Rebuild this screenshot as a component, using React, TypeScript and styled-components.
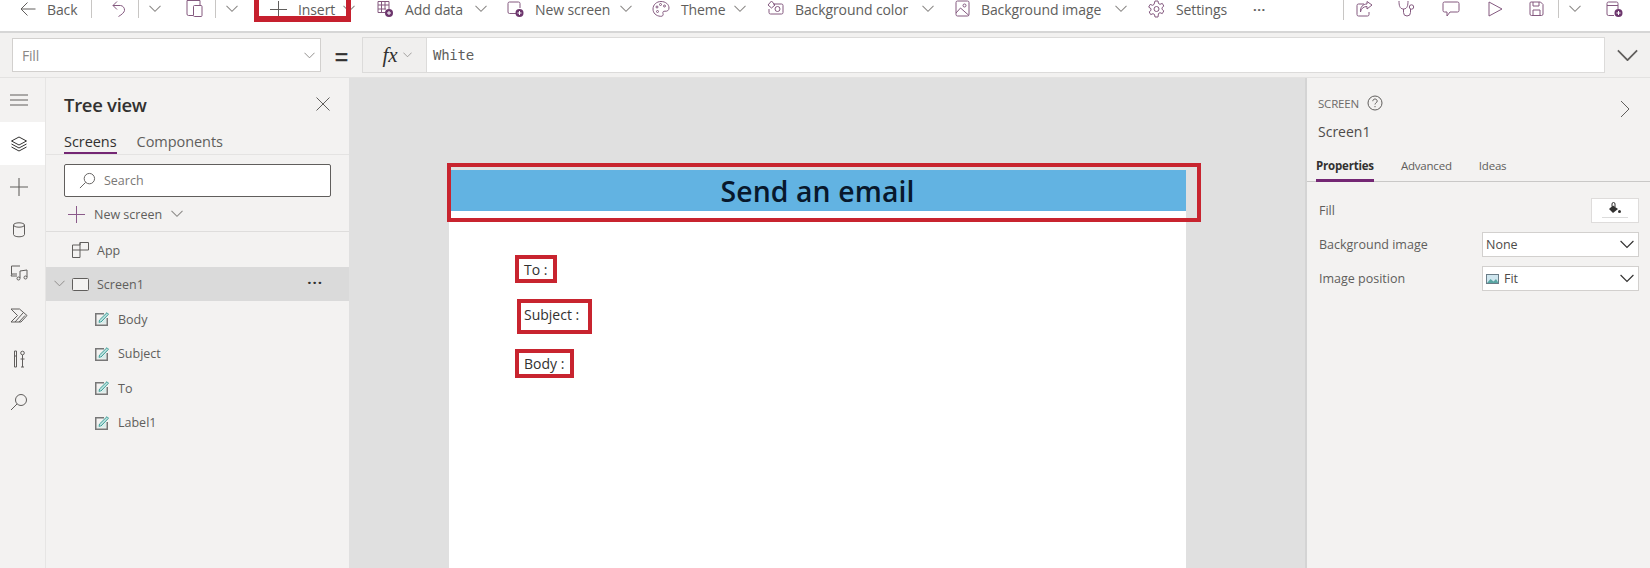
import React from "react";
import styled, { createGlobalStyle } from "styled-components";

const GlobalStyle = createGlobalStyle`
  html, body { margin: 0; padding: 0; height: 100%; background: #fff; overflow: hidden; }
  body { font-family: "Open Sans", "Noto Sans", "Liberation Sans", sans-serif; color: #605e5c; }
  * { box-sizing: border-box; }
`;

const Page = styled.div`
  width: 1650px;
  height: 568px;
  display: flex;
  flex-direction: column;
  overflow: hidden;
`;

/* ---------- top command bar ---------- */
const CommandBar = styled.div`
  position: relative;
  flex: none;
  height: 31px;
  padding-left: 20px;
  display: flex;
  align-items: flex-start;
  background: #fff;
  overflow: hidden;
`;
const Slot = styled.div<{ $w: number }>`
  flex: none;
  width: ${(p) => p.$w}px;
  height: 18px;
  display: flex;
  align-items: center;
  gap: 11px;
  font-size: 14px;
  letter-spacing: -0.1px;
  color: #605e5c;
  white-space: nowrap;
`;
const Separator = styled.span<{ $h?: number }>`
  display: block;
  width: 1px;
  height: ${(p) => p.$h ?? 18}px;
  background: #c8c6c4;
`;
const Dots = styled.span`
  font-size: 13px;
  font-weight: 700;
  letter-spacing: 0.5px;
  line-height: 14px;
  color: #605e5c;
`;
const InsertMark = styled.div`
  position: absolute;
  left: 254px;
  top: -8px;
  width: 97px;
  height: 30px;
  border: solid #c6202e;
  border-width: 5px 5px 6px 5px;
  pointer-events: none;
`;

/* ---------- formula bar ---------- */
const FormulaBar = styled.div`
  flex: none;
  height: 47px;
  display: flex;
  align-items: flex-start;
  padding: 4px 0 0 12px;
  background: #f2f1f0;
  border-top: 2px solid #d6d6d6;
  border-bottom: 1px solid #e3e2e1;
`;
const PropertySelect = styled.div`
  width: 309px;
  height: 34px;
  margin-top: 1px;
  padding: 0 5px 0 9px;
  display: flex;
  align-items: center;
  justify-content: space-between;
  background: #fff;
  border: 1px solid #d2d0ce;
  font-size: 14px;
  letter-spacing: -0.2px;
  color: #8a8886;
`;
const EqualSign = styled.div`
  width: 41px;
  height: 36px;
  display: flex;
  align-items: center;
  justify-content: center;
  font: 400 23px "Liberation Sans", sans-serif;
  -webkit-text-stroke: 0.4px #323130;
  color: #323130;
  padding-top: 4px;
`;
const FxButton = styled.div`
  width: 64px;
  height: 36px;
  display: flex;
  align-items: center;
  justify-content: center;
  gap: 5px;
  padding-left: 5px;
  background: #f0efee;
  border: 1px solid #dcdbda;
  border-right: none;
  font: italic 400 21px "Liberation Serif", serif;
  color: #323130;
`;
const FormulaInput = styled.div`
  width: 1179px;
  height: 36px;
  padding: 0 6px;
  display: flex;
  align-items: center;
  background: #fff;
  border: 1px solid #dcdbda;
  font: 14px "DejaVu Sans Mono", "Liberation Mono", monospace;
  letter-spacing: -0.25px;
  color: #605e5c;
`;
const FormulaExpand = styled.div`
  width: 45px;
  height: 36px;
  display: flex;
  align-items: center;
  justify-content: center;
`;

/* ---------- body ---------- */
const Workspace = styled.div`
  flex: 1;
  min-height: 0;
  display: flex;
`;
const Rail = styled.nav`
  flex: none;
  width: 46px;
  background: #f3f2f1;
  border-right: 1px solid #e6e5e4;
`;
const RailSlot = styled.div<{ $active?: boolean; $h?: number }>`
  width: 45px;
  height: ${(p) => p.$h ?? 43}px;
  padding-left: 10px;
  display: flex;
  align-items: center;
  background: ${(p) => (p.$active ? "#fff" : "transparent")};
`;

const TreePanel = styled.aside`
  flex: none;
  width: 303px;
  background: #f3f2f1;
`;
const PanelTitleRow = styled.div`
  height: 54px;
  padding: 0 19px 2px 18px;
  display: flex;
  align-items: center;
  justify-content: space-between;
`;
const PanelTitle = styled.h2`
  margin: 0;
  font-size: 18.5px;
  font-weight: 600;
  letter-spacing: -0.3px;
  color: #323130;
`;
const TreeTabs = styled.div`
  height: 23px;
  padding-left: 18px;
  display: flex;
  gap: 20px;
  border-bottom: 1px solid #e4e3e2;
`;
const TreeTab = styled.div<{ $active?: boolean }>`
  height: 22px;
  line-height: 20px;
  font-size: 14.5px;
  letter-spacing: -0.05px;
  color: ${(p) => (p.$active ? "#323130" : "#605e5c")};
  border-bottom: 2px solid ${(p) => (p.$active ? "#742774" : "transparent")};
`;
const SearchBox = styled.div`
  height: 33px;
  margin: 9px 18px 0;
  padding-left: 14px;
  display: flex;
  align-items: center;
  gap: 8px;
  background: #fff;
  border: 1px solid #605e5c;
  border-radius: 2px;
  font-size: 12.5px;
  color: #7a7876;
`;
const NewScreenRow = styled.div`
  height: 35px;
  padding-left: 22px;
  display: flex;
  align-items: center;
  gap: 9px;
  font-size: 12.5px;
  color: #605e5c;
  border-bottom: 1px solid #dedddc;
`;
const TreeRow = styled.div<{ $depth?: number; $selected?: boolean }>`
  height: 34.5px;
  position: relative;
  padding-left: ${(p) => (p.$depth === 1 ? 49 : 26)}px;
  padding-top: 2px;
  display: flex;
  align-items: center;
  gap: ${(p) => (p.$depth === 1 ? 9 : 8)}px;
  font-size: 12.5px;
  color: #605e5c;
  background: ${(p) => (p.$selected ? "#dadada" : "transparent")};
`;
const RowCaret = styled.span`
  position: absolute;
  left: 8px;
  top: 13px;
  display: flex;
`;
const RowMenu = styled.span`
  position: absolute;
  right: 26px;
  top: 8px;
  font-size: 15px;
  font-weight: 700;
  line-height: 14px;
  letter-spacing: 1px;
  color: #323130;
`;

const Canvas = styled.main`
  flex: 1;
  min-width: 0;
  padding: 92px 119px 0 100px;
  background: #e0e0e0;
`;
const AppScreen = styled.div`
  position: relative;
  width: 737px;
  height: 400px;
  background: #fff;
`;
const HeaderLabel = styled.div`
  height: 41px;
  display: flex;
  align-items: center;
  justify-content: center;
  background: #62b3e2;
  font-size: 28.4px;
  font-weight: 600;
  letter-spacing: 0.1px;
  color: #08182c;
`;
const HeaderMark = styled.div`
  position: absolute;
  left: -2px;
  top: -7px;
  width: 754px;
  height: 59px;
  border: 4px solid #c8242f;
`;
const FieldLabel = styled.div<{ $x: number; $y: number; $w: number; $h: number; $lift?: number }>`
  position: absolute;
  left: ${(p) => p.$x}px;
  top: ${(p) => p.$y}px;
  width: ${(p) => p.$w}px;
  height: ${(p) => p.$h}px;
  padding-left: ${(p) => (p.$x === 68 ? 3 : 5)}px;
  padding-bottom: ${(p) => p.$lift ?? 0}px;
  display: flex;
  align-items: center;
  border: 4px solid #c8242f;
  font-size: 14px;
  color: #323130;
  white-space: nowrap;
`;

const PropsPanel = styled.aside`
  flex: none;
  width: 345px;
  background: #f3f2f1;
  border-left: 2px solid #d4d4d4;
`;
const PropsHead = styled.div`
  position: relative;
  height: 76px;
  padding: 15px 0 0 11px;
`;
const ScreenKind = styled.div`
  display: flex;
  align-items: center;
  gap: 8px;
  height: 20px;
  font-size: 11.5px;
  letter-spacing: -0.2px;
  color: #6d6b69;
`;
const ScreenName = styled.div`
  margin-top: 9px;
  font-size: 14px;
  color: #4d4b49;
`;
const Collapse = styled.span`
  position: absolute;
  right: 20px;
  top: 22px;
  display: flex;
`;
const PropsTabs = styled.div`
  height: 28px;
  padding-left: 9px;
  display: flex;
  gap: 27px;
  border-bottom: 1px solid #c9c8c7;
`;
const PropsTab = styled.div<{ $active?: boolean }>`
  height: 28px;
  line-height: 24px;
  font-size: 11.5px;
  letter-spacing: -0.2px;
  font-weight: ${(p) => (p.$active ? 700 : 400)};
  color: ${(p) => (p.$active ? "#323130" : "#605e5c")};
  border-bottom: ${(p) => (p.$active ? "3px solid #742774" : "none")};
`;
const PropsForm = styled.div`
  padding: 15px 11px 0 12px;
  display: flex;
  flex-direction: column;
  gap: 9px;
`;
const PropRow = styled.div<{ $h?: number }>`
  height: ${(p) => p.$h ?? 25}px;
  display: flex;
  align-items: center;
  justify-content: space-between;
  font-size: 12.5px;
  color: #605e5c;
`;
const Swatch = styled.div`
  width: 48px;
  height: 25px;
  display: flex;
  flex-direction: column;
  align-items: center;
  padding-top: 3px;
  gap: 3px;
  background: #fff;
  border: 1px solid #dedcdb;
`;
const SwatchLine = styled.span`
  width: 26px;
  height: 1px;
  background: #dcdcdc;
`;
const PropSelect = styled.div`
  width: 157px;
  height: 25px;
  padding: 0 4px 0 3px;
  display: flex;
  align-items: center;
  gap: 5px;
  background: #fff;
  border: 1px solid #d2d0ce;
  font-size: 12.5px;
  color: #4d4b49;
`;
const SelectValue = styled.span`
  flex: 1;
`;

/* ---------- drawings ---------- */
const P = "#84597f";
const B = "#6d366d";
const G = "#605e5c";

const Glyph = styled.svg`
  flex: none;
  display: block;
  fill: none;
  stroke-width: 1;
`;

const Chevron = ({ size = 12, color = "#8a8886" }: { size?: number; color?: string }) => (
  <Glyph width={size} height={size * 0.6} viewBox="0 0 12 7" stroke={color} preserveAspectRatio="none">
    <path d="M.5.8 6 6.2 11.5.8" />
  </Glyph>
);
const Arrow = () => (
  <Glyph width="16" height="16" viewBox="0 0 16 16" stroke={G}>
    <path d="M15.5 8H1M7.5 1.5 1 8l6.5 6.5" />
  </Glyph>
);
const Undo = () => (
  <Glyph width="14" height="16" viewBox="0 0 14 16" stroke={P}>
    <path d="M5 .5 1 4.500 5 8.500M1 4.500h7.500a4.500 4.500 0 0 1 4 5c-.3 1.800-2.500 4-6 6" />
  </Glyph>
);
const Paste = () => (
  <Glyph width="17" height="17" viewBox="0 0 17 17" stroke={P} style={{ marginTop: -2 }}>
    <path d="M7 15.500H2.500A1.500 1.500 0 0 1 1 14V.5h13V5" />
    <rect x="7.500" y="5.500" width="8.500" height="11" rx="1" />
  </Glyph>
);
const Plus = ({ size = 17, color = G }: { size?: number; color?: string }) => (
  <Glyph width={size} height={size} viewBox="0 0 17 17" stroke={color}>
    <path d="M8.500 0v17M0 8.500h17" />
  </Glyph>
);
const Badge = ({ cx, cy }: { cx: number; cy: number }) => (
  <>
    <circle cx={cx} cy={cy} r="4" fill={B} stroke="none" />
    <path d={`M${cx - 2} ${cy}h4M${cx} ${cy - 2}v4`} stroke="#fff" />
  </>
);
const AddData = () => (
  <Glyph width="17" height="18" viewBox="0 0 17 18" stroke={P}>
    <path d="M1 1.500h11v8M1 1.500v11h7M1 5h11M1 9h8M4.500 1.500v11M8 1.500v8" />
    <Badge cx={12} cy={13} />
  </Glyph>
);
const NewScreen = () => (
  <Glyph width="17" height="18" viewBox="0 0 17 18" stroke={P}>
    <path d="M9 13.500H2.500a1.500 1.500 0 0 1-1.500-1.500V3.500A1.500 1.500 0 0 1 2.500 2h9A1.500 1.500 0 0 1 13 3.500V8" />
    <Badge cx={12.500} cy={13} />
  </Glyph>
);
const Palette = () => (
  <Glyph width="18" height="18" viewBox="0 0 18 18" stroke={P}>
    <path d="M9 1.500c4.500 0 8 2.800 8 6.500 0 2.500-2 3.500-4 3.200-1.800-.3-2.500 1-2 2.300.6 1.800-.4 3-2.500 2.800C4 16 1 13 1 9c0-4.200 3.500-7.500 8-7.500Z" />
    <circle cx="5" cy="7" r="1" />
    <circle cx="8.500" cy="4.500" r="1" />
    <circle cx="12.500" cy="6" r="1" />
    <circle cx="5.500" cy="11.500" r="1" />
  </Glyph>
);
const BgColor = () => (
  <Glyph width="17" height="16" viewBox="0 0 17 16" stroke={P}>
    <path d="M6 3h8.500A1.500 1.500 0 0 1 16 4.500v7a1.500 1.500 0 0 1-1.500 1.500h-11A1.500 1.500 0 0 1 2 11.500V8" />
    <path d="M4.500 0 1 4l3.500 3L8 4 4.500 0Z" />
    <circle cx="10.500" cy="8" r="2.500" />
  </Glyph>
);
const BgImage = () => (
  <Glyph width="15" height="18" viewBox="0 0 15 18" stroke={P}>
    <rect x="1" y="1" width="13" height="15" rx="1.500" />
    <circle cx="9.500" cy="5.500" r="1.500" />
    <path d="m1 13 4.500-5 8.500 7.500" />
  </Glyph>
);
const Gear = () => (
  <Glyph width="17" height="18" viewBox="0 0 17 18" stroke={P}>
    <circle cx="8.500" cy="9" r="2.500" />
    <path d="M7 1h3l.5 2.500 1.500.8 2.300-.9 1.500 2.700-1.800 1.600v1.600l1.800 1.600-1.500 2.700-2.300-.9-1.500.8L10 17H7l-.5-2.500-1.500-.8-2.300.9-1.500-2.700 1.800-1.600V8.700L.7 7.100l1.500-2.700 2.300.9 1.500-.8L7 1Z" />
  </Glyph>
);
const Share = () => (
  <Glyph width="17" height="16" viewBox="0 0 17 16" stroke={P}>
    <path d="M8 3H2.500A1.500 1.500 0 0 0 1 4.500v9A1.500 1.500 0 0 0 2.500 15h9a1.500 1.500 0 0 0 1.500-1.500V11" />
    <path d="M4.500 11c.5-3.500 3-5.500 6.500-5.500V8L16 4l-5-3.500V3C7 3 4 6 4.500 11Z" />
  </Glyph>
);
const Stethoscope = () => (
  <Glyph width="18" height="16" viewBox="0 0 18 16" stroke={P}>
    <path d="M1 0c0 4 .5 8 4.500 8S10 4 10 0M5.500 8v3.500a3.500 3.500 0 0 0 7 0V8" />
    <circle cx="13.500" cy="6" r="2.200" />
  </Glyph>
);
const Comment = () => (
  <Glyph width="18" height="16" viewBox="0 0 18 16" stroke={P}>
    <path d="M2.500 1h13A1.500 1.500 0 0 1 17 2.500v7a1.500 1.500 0 0 1-1.500 1.500H8L5 15v-4H2.500A1.500 1.500 0 0 1 1 9.500v-7A1.500 1.500 0 0 1 2.500 1Z" />
  </Glyph>
);
const Play = () => (
  <Glyph width="15" height="16" viewBox="0 0 15 16" stroke={P}>
    <path d="M1 1v14l13-7L1 1Z" />
  </Glyph>
);
const Save = () => (
  <Glyph width="15" height="16" viewBox="0 0 15 16" stroke={P}>
    <path d="M2 1h9.500L14 3.500V13a1.500 1.500 0 0 1-1.500 1.500h-10A1.500 1.500 0 0 1 1 13V2a1 1 0 0 1 1-1Z" />
    <path d="M4 1v4h6V1M4 14.500V9h7v5.500" />
  </Glyph>
);
const Publish = () => (
  <Glyph width="17" height="16" viewBox="0 0 17 16" stroke={P}>
    <path d="M8 14.500H2.500A1.500 1.500 0 0 1 1 13V2.500A1.500 1.500 0 0 1 2.500 1h8A1.500 1.500 0 0 1 12 2.500V8M1 4.500h11" />
    <Badge cx={12.500} cy={12} />
  </Glyph>
);

const Hamburger = () => (
  <Glyph width="18" height="12" viewBox="0 0 18 12" stroke={G}>
    <path d="M0 1h18M0 6h18M0 11h18" />
  </Glyph>
);
const Layers = () => (
  <Glyph width="18" height="16" viewBox="0 0 18 16" stroke="#323130">
    <path d="M9 1 1.500 5 9 9l7.500-4L9 1Z" />
    <path d="M1.500 8 9 12l7.500-4M1.500 11 9 15l7.500-4" />
  </Glyph>
);
const Cylinder = () => (
  <Glyph width="14" height="16" viewBox="0 0 14 16" stroke={G} style={{ marginLeft: 2 }}>
    <ellipse cx="7" cy="3" rx="5.500" ry="2.200" />
    <path d="M1.500 3v9.500c0 1.300 2.500 2.300 5.500 2.300s5.500-1 5.500-2.300V3" />
  </Glyph>
);
const Media = () => (
  <Glyph width="18" height="16" viewBox="0 0 18 16" stroke={G}>
    <path d="M10 1H1.500v8H7M2 9l-1 2h6" />
    <path d="M10 13V6l7-1v7" />
    <circle cx="8.500" cy="13.500" r="1.500" />
    <circle cx="15.500" cy="12.500" r="1.500" />
  </Glyph>
);
const PowerAutomate = () => (
  <Glyph width="18" height="15" viewBox="0 0 18 15" stroke={G}>
    <path d="M1 1h8.500l7.500 6.500-6 6.500H1l6.500-6.500L1 1ZM5 14 13 5M9 14l6-6.500" />
  </Glyph>
);
const Tools = () => (
  <Glyph width="12" height="18" viewBox="0 0 12 18" stroke={G} strokeWidth="1.400" style={{ marginLeft: 3 }}>
    <path d="M1.500 1h2v16h-2V1ZM1.500 6h2M9.500 5v12M7.500 9h4M8 17h3" />
    <circle cx="9.500" cy="3" r="1.800" />
  </Glyph>
);
const Search = ({ size = 18, color = G }: { size?: number; color?: string }) => (
  <Glyph width={size} height={size} viewBox="0 0 18 18" stroke={color}>
    <circle cx="11" cy="7" r="5.500" />
    <path d="M7 11 1 17" />
  </Glyph>
);
const Close = () => (
  <Glyph width="14" height="14" viewBox="0 0 14 14" stroke={G}>
    <path d="m.5.500 13 13M13.500.500l-13 13" />
  </Glyph>
);
const AppGrid = () => (
  <Glyph width="17" height="16" viewBox="0 0 17 16" stroke={G}>
    <path d="M.5 3H8V.5h8.500V8H.5M.5 3v12.500H8V.5" />
  </Glyph>
);
const ScreenGlyph = () => (
  <Glyph width="17" height="13" viewBox="0 0 17 13" stroke={G}>
    <rect x=".5" y=".5" width="16" height="12" rx="1" fill="#f3f2f1" />
  </Glyph>
);
const EditLabel = () => (
  <Glyph width="14" height="14" viewBox="0 0 14 14">
    <path d="M9 1.750H.75v11.500h11.500V6" stroke="#777" strokeWidth="1.500" />
    <path d="m4 10.500.5-2.500L12 .7l1.500 1.500L6 10l-2 .5Z" fill="#bfe3e0" stroke="#3a9e98" />
    <path d="M2 11.500h9V6L6.500 10.500 3 11V7" fill="#d8ecea" stroke="none" />
  </Glyph>
);
const Bucket = () => (
  <Glyph width="14" height="12" viewBox="0 0 14 12">
    <path d="M5 3.500 1 7l4 4 5-4-5-3.500Z" fill="#323130" />
    <path d="M4 4.500V2a1.500 1.500 0 0 1 3 0v3" stroke="#323130" />
    <circle cx="11.500" cy="9.500" r="1.500" fill="#323130" />
  </Glyph>
);
const Help = () => (
  <Glyph width="16" height="16" viewBox="0 0 16 16" stroke={G}>
    <circle cx="8" cy="8" r="7" />
    <path d="M5.800 6.200C5.800 4.900 6.800 4 8 4s2.200.9 2.200 2.100c0 1.700-2.200 1.700-2.200 3.400M8 11v1.200" />
  </Glyph>
);
const Right = () => (
  <Glyph width="10" height="18" viewBox="0 0 10 18" stroke={G}>
    <path d="m1 1 8 8-8 8" />
  </Glyph>
);
const Picture = () => (
  <Glyph width="13" height="10" viewBox="0 0 13 10">
    <rect x=".5" y=".5" width="12" height="9" fill="#cfe6ef" stroke="#6a7d88" />
    <path d="m1 9 3.500-4 3 2.500L10 5l2.500 4H1Z" fill="#59a6a3" />
  </Glyph>
);

const EDITS = ["Body", "Subject", "To", "Label1"];

export default function App() {
  return (
    <Page>
      <GlobalStyle />
      <CommandBar>
        <Slot $w={71}><Arrow />Back</Slot>
        <Slot $w={21}><Separator /></Slot>
        <Slot $w={26}><Undo /></Slot>
        <Slot $w={11}><Separator /></Slot>
        <Slot $w={37}><Chevron /></Slot>
        <Slot $w={29}><Paste /></Slot>
        <Slot $w={11}><Separator /></Slot>
        <Slot $w={44}><Chevron /></Slot>
        <Slot $w={73}><Plus />Insert</Slot>
        <Slot $w={34}><Chevron /></Slot>
        <Slot $w={98}><AddData />Add data</Slot>
        <Slot $w={32}><Chevron /></Slot>
        <Slot $w={113}><NewScreen />New screen</Slot>
        <Slot $w={32}><Chevron /></Slot>
        <Slot $w={82}><Palette />Theme</Slot>
        <Slot $w={33}><Chevron /></Slot>
        <Slot $w={155}><BgColor />Background color</Slot>
        <Slot $w={33}><Chevron /></Slot>
        <Slot $w={160}><BgImage />Background image</Slot>
        <Slot $w={33}><Chevron /></Slot>
        <Slot $w={105}><Gear />Settings</Slot>
        <Slot $w={90}><Dots>···</Dots></Slot>
        <Slot $w={13}><Separator $h={22} /></Slot>
        <Slot $w={42}><Share /></Slot>
        <Slot $w={44}><Stethoscope /></Slot>
        <Slot $w={46}><Comment /></Slot>
        <Slot $w={41}><Play /></Slot>
        <Slot $w={29}><Save /></Slot>
        <Slot $w={11}><Separator /></Slot>
        <Slot $w={37}><Chevron /></Slot>
        <Slot $w={24}><Publish /></Slot>
        <InsertMark />
      </CommandBar>

      <FormulaBar>
        <PropertySelect>Fill<Chevron size={11} /></PropertySelect>
        <EqualSign>=</EqualSign>
        <FxButton>fx<Chevron size={9} /></FxButton>
        <FormulaInput>White</FormulaInput>
        <FormulaExpand><Chevron size={21} color="#605e5c" /></FormulaExpand>
      </FormulaBar>

      <Workspace>
        <Rail>
          <RailSlot $h={44}><Hamburger /></RailSlot>
          <RailSlot $active><Layers /></RailSlot>
          <RailSlot><Plus size={18} /></RailSlot>
          <RailSlot><Cylinder /></RailSlot>
          <RailSlot><Media /></RailSlot>
          <RailSlot><PowerAutomate /></RailSlot>
          <RailSlot><Tools /></RailSlot>
          <RailSlot><Search /></RailSlot>
        </Rail>

        <TreePanel>
          <PanelTitleRow>
            <PanelTitle>Tree view</PanelTitle>
            <Close />
          </PanelTitleRow>
          <TreeTabs>
            <TreeTab $active>Screens</TreeTab>
            <TreeTab>Components</TreeTab>
          </TreeTabs>
          <SearchBox><Search size={17} />Search</SearchBox>
          <NewScreenRow>
            <Plus size={17} color="#8a5a8a" />
            New screen
            <Chevron size={12} />
          </NewScreenRow>
          <TreeRow><AppGrid />App</TreeRow>
          <TreeRow $selected>
            <RowCaret><Chevron size={11} /></RowCaret>
            <ScreenGlyph />Screen1
            <RowMenu>···</RowMenu>
          </TreeRow>
          {EDITS.map((name) => (
            <TreeRow key={name} $depth={1}><EditLabel />{name}</TreeRow>
          ))}
        </TreePanel>

        <Canvas>
          <AppScreen>
            <HeaderLabel>Send an email</HeaderLabel>
            <HeaderMark />
            <FieldLabel $x={66} $y={85} $w={42} $h={28}>To :</FieldLabel>
            <FieldLabel $x={68} $y={129} $w={75} $h={35} $lift={4}>Subject :</FieldLabel>
            <FieldLabel $x={66} $y={179} $w={59} $h={29} $lift={1}>Body :</FieldLabel>
          </AppScreen>
        </Canvas>

        <PropsPanel>
          <PropsHead>
            <ScreenKind>SCREEN<Help /></ScreenKind>
            <ScreenName>Screen1</ScreenName>
            <Collapse><Right /></Collapse>
          </PropsHead>
          <PropsTabs>
            <PropsTab $active>Properties</PropsTab>
            <PropsTab>Advanced</PropsTab>
            <PropsTab>Ideas</PropsTab>
          </PropsTabs>
          <PropsForm>
            <PropRow $h={26}>
              Fill
              <Swatch><Bucket /><SwatchLine /></Swatch>
            </PropRow>
            <PropRow>
              Background image
              <PropSelect><SelectValue>None</SelectValue><Chevron size={14} color="#323130" /></PropSelect>
            </PropRow>
            <PropRow>
              Image position
              <PropSelect><Picture /><SelectValue>Fit</SelectValue><Chevron size={14} color="#323130" /></PropSelect>
            </PropRow>
          </PropsForm>
        </PropsPanel>
      </Workspace>
    </Page>
  );
}
